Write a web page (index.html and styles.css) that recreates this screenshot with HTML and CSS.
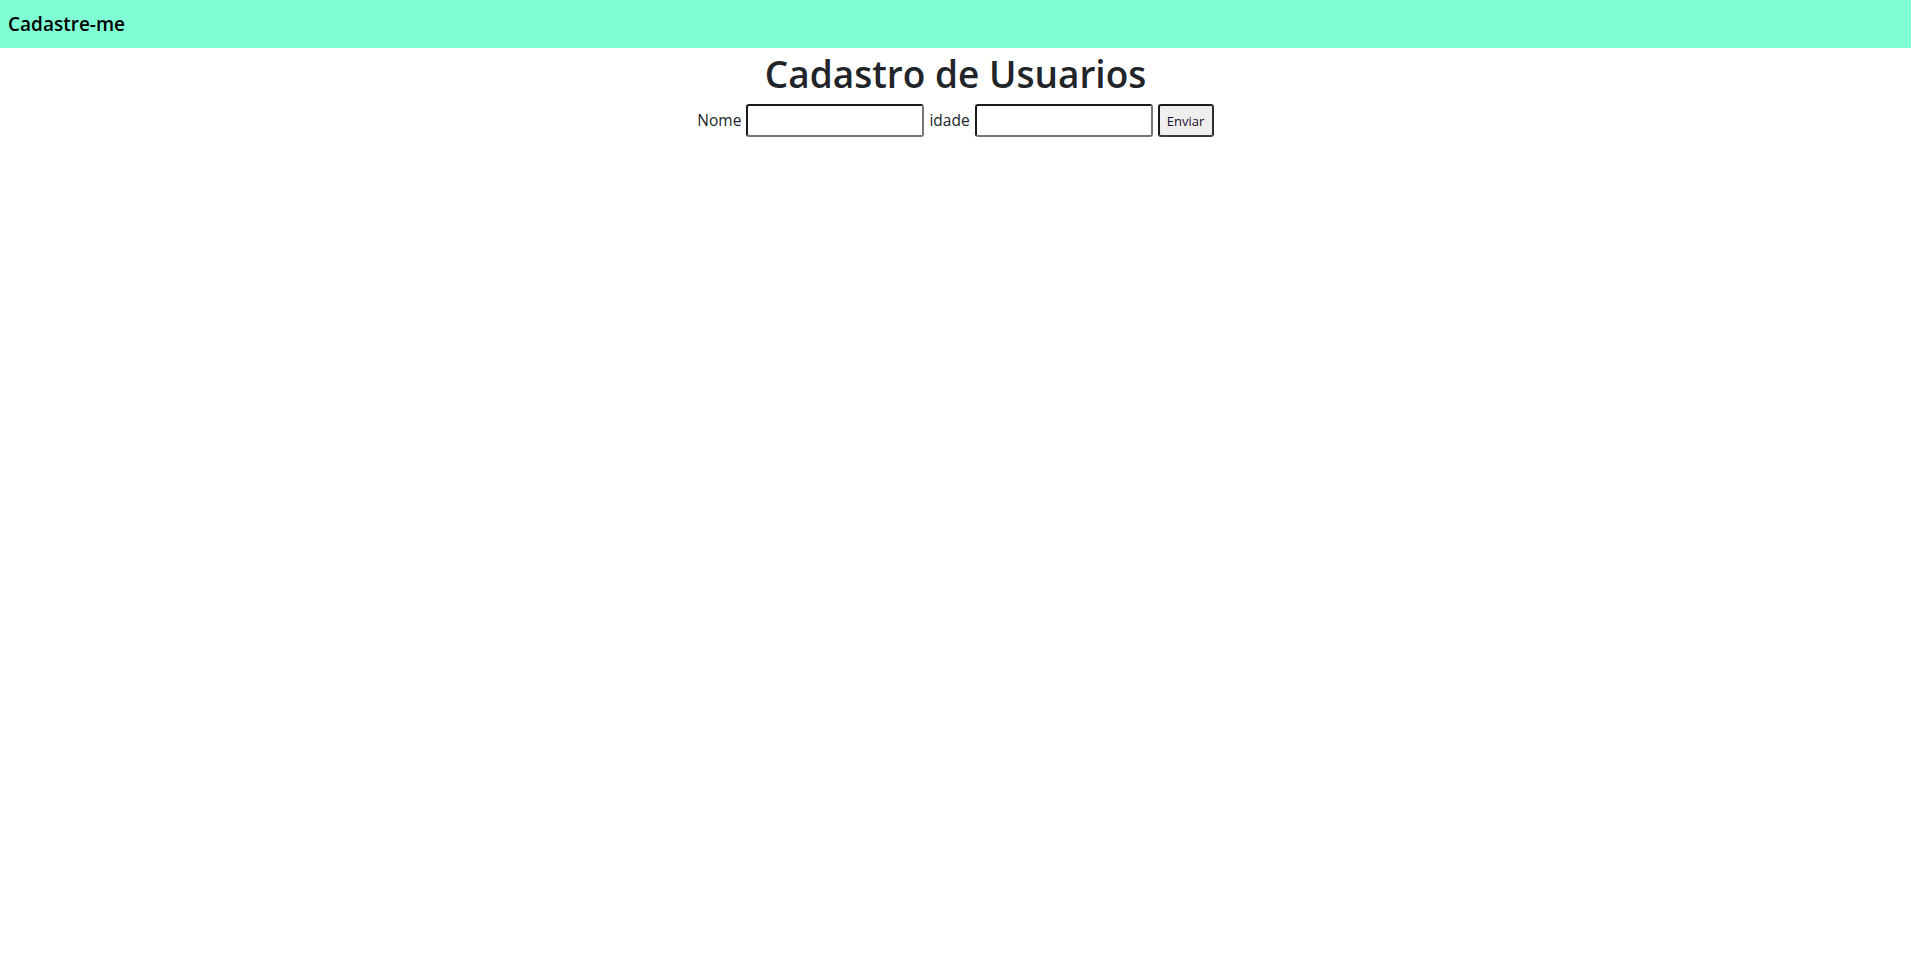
FILE: index.html
```html
<!DOCTYPE html>
<html lang="pt">
<head>
<meta charset="utf-8">
<title>Cadastre-me</title>
<link rel="stylesheet" href="styles.css">
</head>
<body>
  <nav class="navbar">
    <span class="brand">Cadastre-me</span>
  </nav>
  <main class="content">
    <h1 class="title">Cadastro de Usuarios</h1>
    <form class="form-row">
      <label class="label" for="nome">Nome</label>
      <input class="field" id="nome" type="text">
      <label class="label" for="idade">idade</label>
      <input class="field" id="idade" type="text">
      <button class="btn" type="button">Enviar</button>
    </form>
  </main>
</body>
</html>
```
FILE: styles.css
```css
html, body {
  margin: 0;
  padding: 0;
  background: #ffffff;
}

body {
  font-family: "Open Sans", "Noto Sans", "Liberation Sans", sans-serif;
  color: #212529;
}

.navbar {
  height: 48px;
  background: #7fffd4;
  display: flex;
  align-items: center;
  padding: 0 0 0 8px;
  box-sizing: border-box;
}

.brand {
  font-size: 19px;
  font-weight: 600;
  color: #000;
  line-height: 1;
}

.content {
  display: flex;
  flex-direction: column;
  align-items: center;
}

.title {
  margin: 0 0 6px 0;
  padding-top: 2px;
  font-size: 37px;
  font-weight: 600;
  line-height: 48px;
  color: #212529;
}

.form-row {
  display: flex;
  align-items: center;
  gap: 5px;
  margin: 0;
}

.label {
  font-size: 15.5px;
  color: #212529;
  line-height: 20px;
  margin-bottom: 2px;
}

.field {
  box-sizing: border-box;
  width: 178px;
  height: 33px;
  margin: 0;
  padding: 1px 4px;
  border-width: 2px;
  border-style: solid;
  border-color: #1b1b1b #767676 #767676 #1b1b1b;
  border-radius: 3px;
  background: #fff;
  font-family: inherit;
  font-size: 13px;
}

.btn {
  box-sizing: border-box;
  width: 56px;
  height: 33px;
  margin: 0;
  padding: 0;
  border-width: 2px;
  border-style: solid;
  border-color: #1b1b1b #2e2e2e #3a3a3a #1b1b1b;
  border-radius: 3px;
  background: #efefef;
  color: #1a0d2e;
  font-family: inherit;
  font-size: 13px;
}
```
